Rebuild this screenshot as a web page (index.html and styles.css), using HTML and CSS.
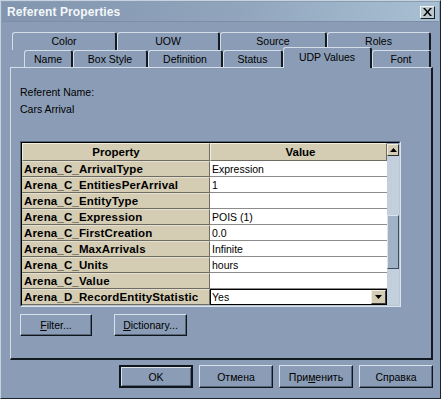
FILE: index.html
```html
<!DOCTYPE html>
<html>
<head>
<meta charset="utf-8">
<link rel="stylesheet" href="styles.css">
</head>
<body>
<div class="window">
  <div class="titlebar">
    <span class="title">Referent Properties</span>
    <span class="close"><svg width="9" height="8" viewBox="0 0 9 8"><path d="M0 0h2l2.5 3 2.5-3h2l-3.5 4 3.5 4h-2l-2.5-3-2.5 3h-2l3.5-4z" fill="#000"/></svg></span>
  </div>
  <div class="tabs">
    <div class="tabrow row1">
      <div class="tab t-color">Color</div>
      <div class="tab t-uow">UOW</div>
      <div class="tab t-source">Source</div>
      <div class="tab t-roles">Roles</div>
    </div>
    <div class="tabrow row2">
      <div class="tab t-name">Name</div>
      <div class="tab t-box">Box Style</div>
      <div class="tab t-def">Definition</div>
      <div class="tab t-status">Status</div>
      <div class="tab t-udp sel">UDP Values</div>
      <div class="tab t-font">Font</div>
    </div>
  </div>
  <div class="panel">
    <div class="label">Referent Name:</div>
    <div class="label second">Cars Arrival</div>
    <div class="frame">
      <div class="frame-inner">
        <div class="table">
          <div class="hcell prop">Property</div>
          <div class="hcell val">Value</div>
          <div class="pcell">Arena_C_ArrivalType</div><div class="vcell">Expression</div>
          <div class="pcell">Arena_C_EntitiesPerArrival</div><div class="vcell">1</div>
          <div class="pcell">Arena_C_EntityType</div><div class="vcell"></div>
          <div class="pcell">Arena_C_Expression</div><div class="vcell">POIS (1)</div>
          <div class="pcell">Arena_C_FirstCreation</div><div class="vcell">0.0</div>
          <div class="pcell">Arena_C_MaxArrivals</div><div class="vcell">Infinite</div>
          <div class="pcell">Arena_C_Units</div><div class="vcell">hours</div>
          <div class="pcell">Arena_C_Value</div><div class="vcell"></div>
          <div class="pcell">Arena_D_RecordEntityStatistic</div>
          <div class="vcell combo"><span class="combo-text">Yes</span><span class="ddbtn"><svg width="7" height="4" viewBox="0 0 7 4"><path d="M0 0h7l-3.5 4z" fill="#000"/></svg></span></div>
        </div>
        <div class="scroll">
          <div class="sbtn"><svg width="7" height="4" viewBox="0 0 7 4"><path d="M3.5 0l3.5 4h-7z" fill="#000"/></svg></div>
          <div class="track"><div class="thumb"></div></div>
        </div>
      </div>
    </div>
    <div class="btnrow">
      <div class="btn b-filter"><u>F</u>ilter...</div>
      <div class="btn b-dict"><u>D</u>ictionary...</div>
    </div>
  </div>
  <div class="footer">
    <div class="btn fbtn default">OK</div>
    <div class="btn fbtn">Отмена</div>
    <div class="btn fbtn">При<u>м</u>енить</div>
    <div class="btn fbtn">Справка</div>
  </div>
</div>
</body>
</html>
```

FILE: styles.css
```css
html, body {
  margin: 0;
  padding: 0;
  background: #8b9db6;
}
body {
  font-family: "Liberation Sans", Arial, sans-serif;
  font-size: 10.5px;
  color: #000;
}
.window {
  width: 441px;
  height: 399px;
  box-sizing: border-box;
  border: 1px solid;
  border-color: #c6d2de #1c242e #1c242e #c6d2de;
  background: #8b9db6;
  overflow: hidden;
}
.titlebar {
  margin: 1px 1px 0 1px;
  height: 20px;
  display: flex;
  align-items: center;
  justify-content: space-between;
  background: linear-gradient(to right, #8195ae, #91a6bd 55%, #a9c0d3);
  border-bottom: 1px solid #7d8fa6;
  box-sizing: border-box;
}
.title {
  font-weight: bold;
  font-size: 12px;
  color: #f4f7fa;
  padding-left: 5px;
  letter-spacing: 0.1px;
}
.close {
  width: 13px;
  height: 11px;
  margin-right: 4px;
  margin-top: 1px;
  display: flex;
  align-items: center;
  justify-content: center;
  background: #bcc8d0;
  border: 1px solid;
  border-color: #eef2f5 #1a1f26 #1a1f26 #eef2f5;
}
.tabs {
  margin-top: 10px;
}
.tabrow {
  display: flex;
}
.row1 {
  margin-left: 11px;
  height: 18px;
}
.row2 {
  margin-left: 23px;
  height: 17px;
  align-items: flex-start;
}
.tab {
  box-sizing: border-box;
  height: 100%;
  border-top: 1px solid #d4dee8;
  border-left: 1px solid #d4dee8;
  border-right: 2px solid #141a22;
  border-radius: 3px 3px 0 0;
  background: #8b9db6;
  display: flex;
  align-items: center;
  justify-content: center;
  padding-bottom: 1px;
}
.row2 .tab { height: 17px; }
.t-color { width: 105px; }
.t-uow { width: 103px; }
.t-source { width: 107px; }
.t-roles { width: 104px; }
.t-name { width: 49px; }
.t-box { width: 75px; }
.t-def { width: 75px; }
.t-status { width: 60px; }
.t-udp { width: 89px; }
.t-font { width: 59px; }
.row2 .tab.sel {
  height: 21px;
  margin-top: -3px;
  position: relative;
  z-index: 2;
  padding-bottom: 2px;
}
.panel {
  margin-left: 9px;
  width: 423px;
  height: 293px;
  box-sizing: border-box;
  border-top: 1px solid #d4dee8;
  border-left: 1px solid #d4dee8;
  border-right: 2px solid #141a22;
  border-bottom: 2px solid #141a22;
  padding: 18px 0 0 9px;
}
.label {
  line-height: 13px;
  height: 13px;
}
.label.second {
  margin-top: 4px;
}
.frame {
  margin-top: 25px;
  width: 381px;
  box-sizing: border-box;
  border: 1px solid;
  border-color: #56667a #dbe4ec #dbe4ec #56667a;
}
.frame-inner {
  display: flex;
  border: 1px solid;
  border-color: #000 #b8c6d4 #b8c6d4 #000;
}
.table {
  display: grid;
  grid-template-columns: 188px 177px;
  grid-template-rows: 18px repeat(9, 16px);
  background: #fff;
}
.hcell {
  background: #d5cdb3;
  font-weight: bold;
  font-size: 11.5px;
  display: flex;
  align-items: center;
  justify-content: center;
  box-sizing: border-box;
  border-top: 1px solid #f2eee2;
  border-left: 1px solid #f2eee2;
  border-right: 1px solid #6e6c62;
  border-bottom: 1px solid #6e6c62;
}
.hcell.val {
  padding-left: 4px;
}
.pcell {
  background: #d5cdb3;
  font-weight: bold;
  font-size: 11.5px;
  box-sizing: border-box;
  padding-left: 2px;
  display: flex;
  align-items: center;
  border-bottom: 1px solid #6e6c62;
  border-right: 1px solid #6e6c62;
  border-top: 1px solid #e4dfcf;
  white-space: nowrap;
  letter-spacing: 0.15px;
}
.vcell {
  background: #fff;
  box-sizing: border-box;
  padding-left: 2px;
  display: flex;
  align-items: center;
  border-bottom: 1px solid #8c8c8c;
  white-space: nowrap;
}
.combo {
  border: 1px solid #000;
  padding-left: 1px;
  justify-content: space-between;
}
.ddbtn {
  width: 15px;
  height: 14px;
  box-sizing: border-box;
  background: #d5cdb3;
  border: 1px solid;
  border-color: #f2eee2 #3a3a36 #3a3a36 #f2eee2;
  display: flex;
  align-items: center;
  justify-content: center;
}
.scroll {
  width: 13px;
  display: flex;
  flex-direction: column;
}
.sbtn {
  height: 12px;
  margin-top: 1px;
  box-sizing: border-box;
  background: #d5cdb3;
  border: 1px solid;
  border-color: #f2eee2 #2e2e2a #2e2e2a #f2eee2;
  display: flex;
  align-items: center;
  justify-content: center;
}
.track {
  flex: 1;
  background: #c2d0dd;
}
.thumb {
  margin-top: 59px;
  height: 54px;
  box-sizing: border-box;
  background: #9fb2c6;
  border: 1px solid;
  border-color: #dbe4ec #3c4a5c #3c4a5c #dbe4ec;
}
.btnrow {
  display: flex;
  gap: 22px;
  margin-top: 7px;
}
.btn {
  height: 22px;
  box-sizing: border-box;
  border: 1px solid;
  border-color: #d9e2ea #10151b #10151b #d9e2ea;
  box-shadow: inset -1px -1px 0 #56667a;
  display: flex;
  align-items: center;
  justify-content: center;
  background: #8b9db6;
}
.b-filter { width: 72px; }
.b-dict { width: 73px; }
.footer {
  display: flex;
  gap: 6px;
  margin-top: 5px;
  margin-left: 118px;
}
.fbtn {
  width: 74px;
  height: 23px;
}
.fbtn.default {
  border: 2px solid #10151b;
  box-shadow: inset 1px 1px 0 #d9e2ea, inset -1px -1px 0 #56667a;
}
u {
  text-decoration: underline;
  text-underline-offset: 1px;
}
```
